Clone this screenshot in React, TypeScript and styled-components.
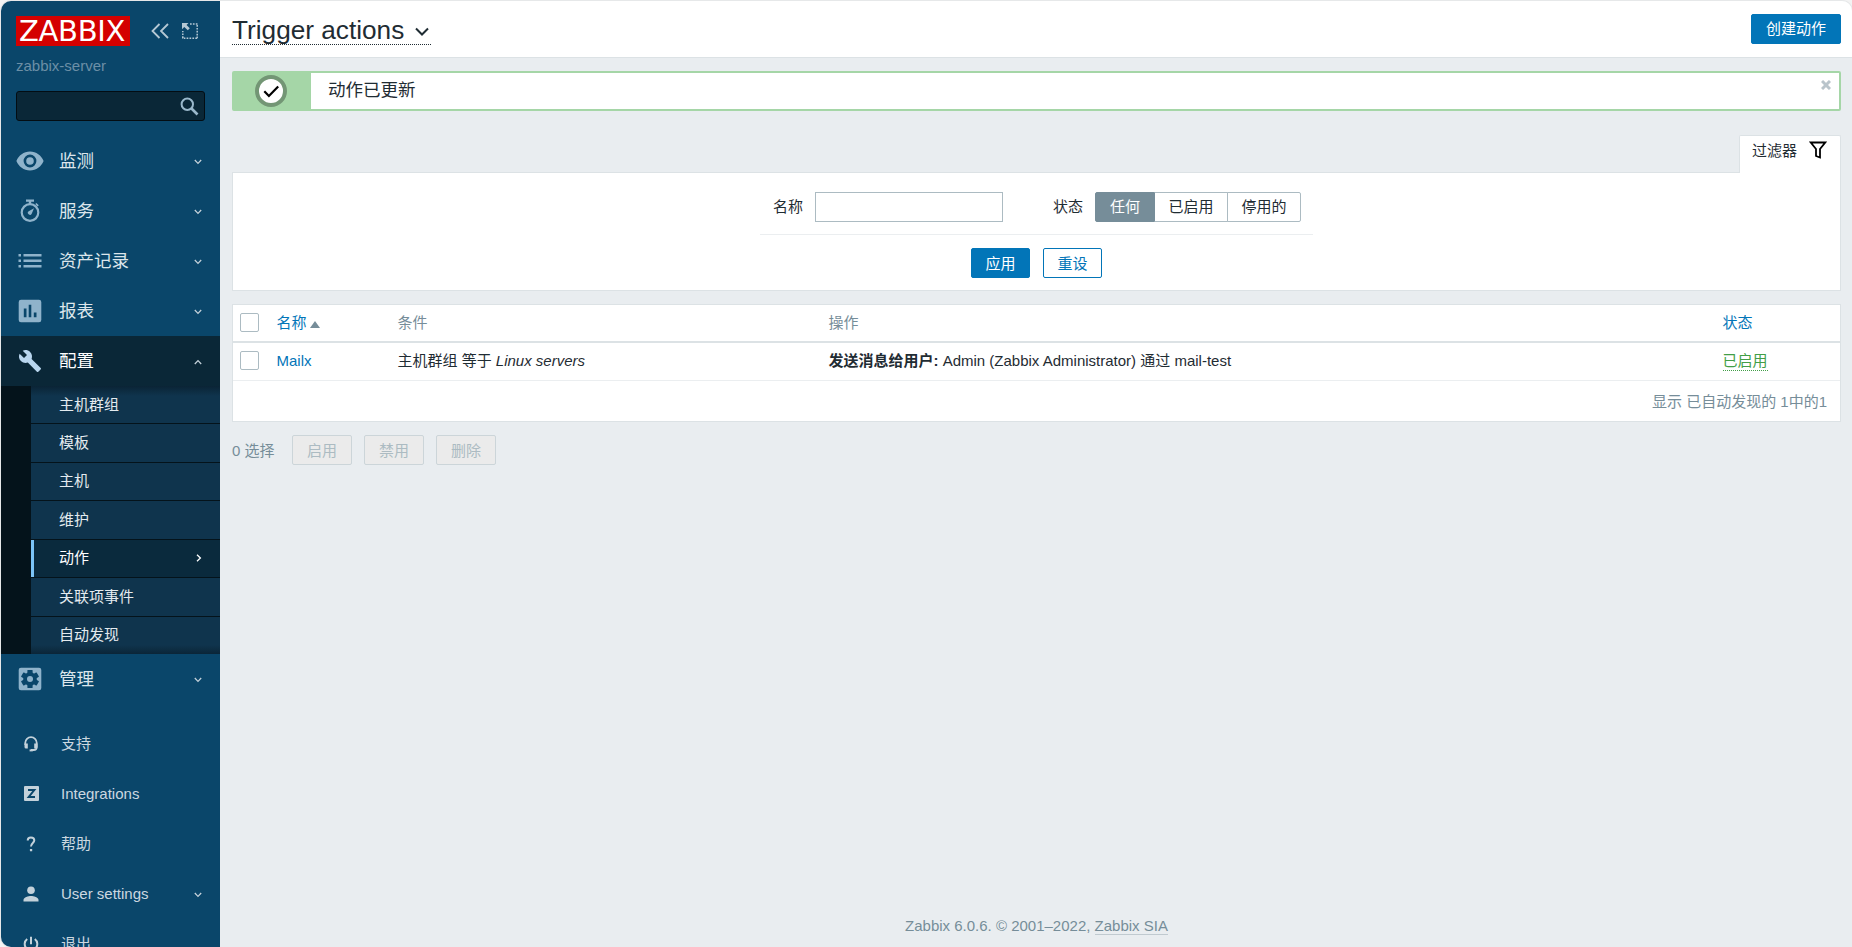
import React from 'react';
import styled, { createGlobalStyle, css } from 'styled-components';

const Global = createGlobalStyle`
  * { box-sizing: border-box; }
  html, body { margin: 0; padding: 0; }
  body {
    background: #f3f3f3;
    color: #1f2c33;
    font: 15px/18px "Liberation Sans", Arial, "Noto Sans CJK SC", sans-serif;
    overflow: hidden;
  }
  a { color: #0275b8; text-decoration: none; }
  button, input { font: inherit; }
  svg { display: block; }
`;

const Frame = styled.div`
  display: flex;
  width: 1852px;
  height: 947px;
  padding: 1px 0 0 1px;
`;
const Shell = styled.div`
  display: flex;
  flex: 1;
  border-radius: 10px 10px 0 10px;
  overflow: hidden;
  box-shadow: 0 0 0 1px #e6e8e9;
`;

/* ---------- sidebar ---------- */
const Sidebar = styled.aside`
  flex: none;
  width: 219px;
  height: 946px;
  background: #0a466a;
  overflow: hidden;
  display: flex;
  flex-direction: column;
`;
const LogoRow = styled.div`
  display: flex;
  align-items: center;
  height: 30px;
  margin: 15px 0 0 15px;
`;
const Logo = styled.div`
  width: 114px;
  height: 30px;
  padding-left: 3px;
  background: #d40000;
  color: #fff;
  font: 29px/31px "DejaVu Sans", sans-serif;
  letter-spacing: -.3px;
  white-space: nowrap;
`;
const HeadButtons = styled.div`
  display: flex;
  gap: 13px;
  margin-left: 21px;
  color: #b5c8d4;
`;
const ServerName = styled.div`
  margin: 11px 0 0 15px;
  height: 18px;
  color: #6c8fa6;
`;
const Search = styled.div`
  display: flex;
  justify-content: flex-end;
  align-items: center;
  flex: none;
  width: 189px;
  height: 30px;
  margin: 16px 0 15px 15px;
  padding-right: 5px;
  border: 1px solid #030d13;
  border-radius: 3px;
  background: #0a2737;
  color: #9ab8cb;
`;
const Item = styled.div<{ $open?: boolean }>`
  display: flex;
  align-items: center;
  flex: none;
  height: 50px;
  padding: 0 18px 1px 15px;
  font-size: 17.5px;
  line-height: 22px;
  color: ${p => (p.$open ? '#fff' : '#dde6ec')};
  background: ${p => (p.$open ? '#0a2737' : 'transparent')};
`;
const ItemIcon = styled.span<{ $open?: boolean }>`
  display: flex;
  justify-content: center;
  width: 28px;
  margin-right: 15px;
  color: ${p => (p.$open ? '#b9d6ee' : '#8fb3cb')};
`;
const ItemText = styled.span`
  flex: 1;
`;
const Arrow = styled.span`
  margin-top: 3px;
  color: #c3d0d9;
`;
const Submenu = styled.div`
  flex: none;
  height: 268px;
  padding-left: 30px;
  background: #04131b;
`;
const SubList = styled.div`
  height: 268px;
  background:
    linear-gradient(to bottom, rgba(5, 20, 30, .5), rgba(5, 20, 30, 0) 10px),
    linear-gradient(to top, rgba(5, 20, 30, .45), rgba(5, 20, 30, 0) 9px),
    #0f344d;
`;
const SubItem = styled.div<{ $active?: boolean }>`
  display: flex;
  align-items: center;
  justify-content: space-between;
  height: 38.5px;
  padding: 0 17px 0 28px;
  color: #e4ebef;
  border-top: 1px solid #04131b;
  &:first-child { height: 37px; border-top: 0; }
  ${p => p.$active && css`
    color: #fff;
    background: linear-gradient(to right, #7cc4f7 3px, #0a2a3d 3px);
  `}
`;
const UserMenu = styled.div`
  margin-top: 14px;
`;
const UserItem = styled.div`
  display: flex;
  align-items: center;
  height: 50px;
  padding: 1px 18px 0 21px;
  color: #ccd8e0;
`;
const UserIcon = styled.span`
  display: flex;
  justify-content: center;
  width: 18px;
  margin-right: 21px;
  color: #c3d1da;
`;

/* ---------- main area ---------- */
const Main = styled.main`
  flex: 1;
  display: flex;
  flex-direction: column;
  background: #e9edf0;
`;
const Header = styled.header`
  display: flex;
  justify-content: space-between;
  align-items: flex-start;
  height: 57px;
  padding: 13px 11px 0 12px;
  background: #fff;
  border-bottom: 1px solid #dce2e5;
`;
const Title = styled.h1`
  display: flex;
  align-items: center;
  height: 31px;
  width: 199px;
  margin: 0;
  font-size: 26.2px;
  line-height: 31px;
  font-weight: 400;
  white-space: nowrap;
  background: repeating-linear-gradient(to right, #1f2c33 0 1px, transparent 1px 2px) bottom / 100% 1px no-repeat;
  svg { margin: 5px 0 0 10px; }
`;
const TitleText = styled.span`
  display: block;
  width: 173px;
  margin-top: 1px;
`;
const Button = styled.button<{ $kind?: 'solid' | 'outline' | 'disabled'; $w: number; $low?: boolean }>`
  width: ${p => p.$w}px;
  height: 30px;
  padding: ${p => (p.$low ? '1px 0 0' : '0')};
  line-height: ${p => (p.$low ? 27 : 28)}px;
  border-radius: 2px;
  border: 1px solid #0275b8;
  background: #0275b8;
  color: #fff;
  ${p => p.$kind === 'outline' && css`background: #fff; color: #0275b8;`}
  ${p => p.$kind === 'disabled' && css`
    background: #ebebeb; color: #acbbc2; border-color: #ccd5d9;
  `}
`;
const Content = styled.div`
  flex: 1;
  display: flex;
  flex-direction: column;
  padding: 13px 11px 0 12px;
`;
const Message = styled.section`
  display: flex;
  height: 40px;
  border: 2px solid #a5d6a7;
  border-radius: 2px;
  background: #fff;
`;
const MessageIcon = styled.div`
  width: 77px;
  padding: 2px 0 0 21px;
  background: #a5d6a7;
`;
const MessageText = styled.div`
  flex: 1;
  padding: 5px 0 0 17px;
  font-size: 17.5px;
  line-height: 24px;
`;
const Close = styled.span`
  padding: 7px 8px 0 0;
  color: #b9c4cb;
`;
const FilterTab = styled.div`
  display: flex;
  align-items: center;
  align-self: flex-end;
  justify-content: space-between;
  width: 102px;
  height: 38px;
  margin: 24px 0 -1px;
  padding: 0 13px 7px 12px;
  border: 1px solid #dce2e5;
  border-bottom: 0;
  border-radius: 2px 2px 0 0;
  background: #fff;
  position: relative;
  svg { margin-top: -2px; }
`;
const Filter = styled.section`
  height: 119px;
  border: 1px solid #dce2e5;
  background: #fff;
  display: flex;
  flex-direction: column;
  align-items: center;
  padding-top: 19px;
`;
const FilterForm = styled.div`
  display: flex;
  align-items: center;
  width: 553px;
  height: 43px;
  padding: 0 12px 13px 13px;
  border-bottom: 1px solid #ebeef0;
`;
const TextInput = styled.input`
  width: 188px;
  height: 30px;
  margin: 0 50px 0 12px;
  border: 1px solid #acbbc2;
  background: #fff;
`;
const Segments = styled.div`
  display: flex;
  margin-left: 12px;
`;
const Segment = styled.span<{ $w: number; $on?: boolean }>`
  width: ${p => p.$w}px;
  height: 30px;
  line-height: 28px;
  text-align: center;
  border: 1px solid ${p => (p.$on ? '#768d99' : '#acbbc2')};
  background: ${p => (p.$on ? '#768d99' : '#fff')};
  color: ${p => (p.$on ? '#fff' : '#1f2c33')};
  & + & { border-left-width: 0; }
  & + & + & { border-left-width: 1px; margin-left: -1px; }
  &:first-child { border-radius: 2px 0 0 2px; }
  &:last-child { border-radius: 0 2px 2px 0; }
`;
const FilterButtons = styled.div`
  display: flex;
  gap: 13px;
  margin-top: 13px;
`;
const Table = styled.section`
  margin-top: 13px;
  border: 1px solid #dce2e5;
  background: #fff;
`;
const Row = styled.div<{ $head?: boolean }>`
  display: grid;
  grid-template-columns: 36.5px 121px 431px 894px 1fr;
  align-items: center;
  height: 38px;
  padding-left: 7px;
  padding-bottom: ${p => (p.$head ? 1 : 2)}px;
  color: ${p => (p.$head ? '#768d99' : '#1f2c33')};
  border-bottom: ${p => (p.$head ? '2px solid #dce2e5' : '1px solid #ebeef0')};
`;
const Check = styled.span`
  width: 19px;
  height: 19px;
  border: 1px solid #acbbc2;
  border-radius: 2px;
  background: #fff;
`;
const SortLink = styled.a`
  display: flex;
  align-items: center;
  gap: 3px;
`;
const SortMark = styled.span`
  margin-top: 4px;
  border: 5px solid transparent;
  border-bottom: 7px solid #768d99;
  border-top: 0;
`;
const Enabled = styled.a`
  justify-self: start;
  height: 19px;
  line-height: 18px;
  margin-top: 1px;
  color: #429e47;
  border-bottom: 1px dotted #429e47;
`;
const TableFoot = styled.div`
  height: 40px;
  padding: 12px 13px 0 0;
  text-align: right;
  color: #768d99;
`;
const Actions = styled.div`
  display: flex;
  align-items: center;
  gap: 12px;
  margin-top: 13px;
  color: #768d99;
`;
const Selected = styled.span`
  width: 48px;
  padding-top: 1px;
  white-space: nowrap;
`;
const Footer = styled.footer`
  margin: auto 0 12px;
  text-align: center;
  color: #768d99;
  a { color: #768d99; display: inline-block; height: 18px; border-bottom: 1px solid #c0cad0; }
`;

/* ---------- icons ---------- */
const Chevron = ({ dir = 'down' }: { dir?: 'down' | 'up' | 'right' }) => (
  <svg width="8" height="8" viewBox="0 0 8 8" fill="none" stroke="currentColor" strokeWidth="1.3">
    <path d={dir === 'down' ? 'M.8 2l3.2 3.4L7.2 2' : dir === 'up' ? 'M.8 6L4 2.6 7.2 6' : 'M2 .8L5.4 4 2 7.2'} />
  </svg>
);

const Glyph = ({ d, size = 24, box = '0 0 24 24' }: { d: string; size?: number; box?: string }) => (
  <svg width={size} height={size} viewBox={box} fill="currentColor" fillRule="evenodd"><path d={d} /></svg>
);

const EyeIcon = () => (
  <svg width="28" height="20" viewBox="0 0 28 20" fill="currentColor" fillRule="evenodd">
    <path d="M14 .5C7.800 .5 2.600 4.400.4 10c2.200 5.600 7.400 9.500 13.600 9.500s11.400-3.900 13.600-9.500C25.400 4.400 20.200.5 14 .5zm0 15.900a6.400 6.400 0 1 1 0-12.800 6.400 6.400 0 0 1 0 12.800zm0-10.200a3.800 3.800 0 1 0 0 7.600 3.800 3.800 0 0 0 0-7.600z" />
  </svg>
);
const WatchIcon = () => (
  <svg width="20" height="24" viewBox="0 0 20 24" fill="none" stroke="currentColor">
    <circle cx="10" cy="13.500" r="8.300" strokeWidth="2.200" />
    <path d="M6 1.600h8M10 2v3" strokeWidth="2.400" />
    <path d="M15.800 4.500l2.400 2.400" strokeWidth="1.600" />
    <path d="M14 9.300l-2.300 5.400a2 2 0 1 1-3-2.500z" fill="currentColor" stroke="none" />
  </svg>
);
const ListIcon = () => (
  <Glyph d="M.5 5h2.500v2.400H.5zM5.500 5h18v2.400h-18zM.5 10.500h2.500v2.400H.5zM5.500 10.500h18v2.400h-18zM.5 16h2.500v2.400H.5zM5.500 16h18v2.400h-18z" />
);
const ReportIcon = () => (
  <Glyph d="M3 .8h18A2.300 2.300 0 0 1 23.300 3v18a2.300 2.300 0 0 1-2.300 2.300H3A2.300 2.300 0 0 1 .7 21V3A2.300 2.300 0 0 1 3 .8zM5.800 9.600v8.600h2.700V9.600zM10.700 5.800v12.400h2.600V5.800zM15.800 13.400v4.800h2.700v-4.800z" />
);
const WrenchIcon = () => (
  <Glyph d="M22.700 19l-9.100-9.100c.9-2.300.4-5-1.500-6.900-2-2-5-2.400-7.400-1.300L9 6 6 9 1.600 4.700C.4 7.100.9 10.100 2.900 12.100c1.900 1.900 4.600 2.400 6.900 1.500l9.100 9.100c.4.400 1 .4 1.400 0l2.300-2.300c.5-.4.5-1.100.1-1.400z" />
);
const GearIcon = () => (
  <svg width="24" height="24" viewBox="0 0 24 24">
    <rect x=".7" y=".7" width="22.600" height="22.600" rx="2.300" fill="currentColor" />
    <g fill="#0a466a">
      <circle cx="12" cy="12" r="6.800" />
      {[0, 60, 120].map(a => (
        <rect key={a} x="9.400" y="3" width="5.200" height="18" rx=".6" transform={`rotate(${a} 12 12)`} />
      ))}
    </g>
    <circle cx="12" cy="12" r="3" fill="currentColor" />
  </svg>
);
const HeadsetIcon = () => (
  <svg width="16" height="16" viewBox="0 0 16 16" fill="none" stroke="currentColor" strokeWidth="1.800">
    <path d="M2.300 9V6.800a5.700 5.700 0 0 1 11.400 0v4.400c0 1.700-1.200 2.800-3 2.800H8" />
    <path d="M1.500 7.500h3.300v5H3a1.500 1.500 0 0 1-1.500-1.500zM11.200 7.500h3.300V11a1.500 1.500 0 0 1-1.500 1.500h-1.800z" fill="currentColor" stroke="none" />
    <path d="M6.600 14.400h3.200" strokeWidth="2" />
  </svg>
);
const ZIcon = () => (
  <svg width="15" height="15" viewBox="0 0 15 15">
    <rect width="15" height="15" rx="1" fill="currentColor" />
    <path d="M4 4h6.300L4.700 11H11" fill="none" stroke="#0a466a" strokeWidth="2" />
  </svg>
);
const HelpIcon = () => (
  <svg width="10" height="16" viewBox="0 0 10 16" fill="none" stroke="currentColor" strokeWidth="2">
    <path d="M1.700 4.600C1.700 2.600 3 1.500 4.900 1.500S8.300 2.500 8.300 4.300C8.300 6.900 5 7 5 10.400" />
    <path d="M3.900 13h2.300v2.300H3.900z" fill="currentColor" stroke="none" />
  </svg>
);
const PersonIcon = () => (
  <svg width="16" height="16" viewBox="0 0 16 16" fill="currentColor">
    <circle cx="8" cy="4.300" r="3.800" />
    <path d="M.5 15.500v-1.700c0-2.500 5-3.900 7.500-3.900s7.500 1.400 7.500 3.900v1.700z" />
  </svg>
);
const PowerIcon = () => (
  <svg width="16" height="16" viewBox="0 0 16 16" fill="none" stroke="currentColor" strokeWidth="2">
    <path d="M8 .8v7.400M4.200 3A6.300 6.300 0 1 0 11.800 3" />
  </svg>
);

const mainItems = [
  { label: '监测', icon: <EyeIcon /> },
  { label: '服务', icon: <WatchIcon /> },
  { label: '资产记录', icon: <ListIcon /> },
  { label: '报表', icon: <ReportIcon /> },
];
const subItems = ['主机群组', '模板', '主机', '维护', '动作', '关联项事件', '自动发现'];
const userItems = [
  { label: '支持', icon: <HeadsetIcon /> },
  { label: 'Integrations', icon: <ZIcon /> },
  { label: '帮助', icon: <HelpIcon /> },
  { label: 'User settings', icon: <PersonIcon />, arrow: true },
  { label: '退出', icon: <PowerIcon /> },
];

const SidebarNav = () => (
  <Sidebar>
    <LogoRow>
      <Logo>ZABBIX</Logo>
      <HeadButtons>
        <svg width="18" height="16" viewBox="0 0 18 16" fill="none" stroke="currentColor" strokeWidth="1.800">
          <path d="M8.500 1L1.500 8l7 7M17 1l-7 7 7 7" />
        </svg>
        <svg width="16" height="16" viewBox="0 0 16 16" fill="none" stroke="currentColor">
          <path d="M8 1h8M15.200 2v14M15 15.200H0M.8 15V8" strokeWidth="1.500" strokeDasharray="1.700 1.200" />
          <path d="M0 0h6.500L4.500 2l3.300 3.300-2 2L2.300 4 0 6.300z" fill="currentColor" stroke="none" />
        </svg>
      </HeadButtons>
    </LogoRow>
    <ServerName>zabbix-server</ServerName>
    <Search>
      <svg width="19" height="19" viewBox="0 0 19 19" fill="none" stroke="currentColor">
        <circle cx="7.300" cy="7.300" r="5.700" strokeWidth="2" />
        <path d="M11.500 11.500l6 6" strokeWidth="2.600" />
      </svg>
    </Search>
    {mainItems.map(i => (
      <Item key={i.label}>
        <ItemIcon>{i.icon}</ItemIcon>
        <ItemText>{i.label}</ItemText>
        <Arrow><Chevron /></Arrow>
      </Item>
    ))}
    <Item $open>
      <ItemIcon $open><WrenchIcon /></ItemIcon>
      <ItemText>配置</ItemText>
      <Arrow><Chevron dir="up" /></Arrow>
    </Item>
    <Submenu>
      <SubList>
        {subItems.map(s => (
          <SubItem key={s} $active={s === '动作'}>
            {s}
            {s === '动作' && <Chevron dir="right" />}
          </SubItem>
        ))}
      </SubList>
    </Submenu>
    <Item>
      <ItemIcon><GearIcon /></ItemIcon>
      <ItemText>管理</ItemText>
      <Arrow><Chevron /></Arrow>
    </Item>
    <UserMenu>
      {userItems.map(i => (
        <UserItem key={i.label}>
          <UserIcon>{i.icon}</UserIcon>
          <ItemText>{i.label}</ItemText>
          {i.arrow && <Arrow><Chevron /></Arrow>}
        </UserItem>
      ))}
    </UserMenu>
  </Sidebar>
);

export default function App() {
  return (
    <Frame>
      <Global />
      <Shell>
        <SidebarNav />
        <Main>
          <Header>
            <Title>
              <TitleText>Trigger actions</TitleText>
              <svg width="14" height="10" viewBox="0 0 14 10" fill="none" stroke="#1f2c33" strokeWidth="2">
                <path d="M1 1.500l6 6 6-6" />
              </svg>
            </Title>
            <Button $w={90}>创建动作</Button>
          </Header>
          <Content>
            <Message>
              <MessageIcon>
                <svg width="32" height="32" viewBox="0 0 32 32" fill="none">
                  <circle cx="16" cy="16" r="14" fill="#fff" stroke="#739675" strokeWidth="4" />
                  <path d="M9.300 16.300l4.600 4.700 9.300-9.600" stroke="#000" strokeWidth="2.200" />
                </svg>
              </MessageIcon>
              <MessageText>动作已更新</MessageText>
              <Close>
                <svg width="10" height="10" viewBox="0 0 10 10" stroke="currentColor" strokeWidth="3">
                  <path d="M1 1l8 8M9 1L1 9" />
                </svg>
              </Close>
            </Message>
            <FilterTab>
              过滤器
              <svg width="18" height="18" viewBox="0 0 18 18" fill="none" stroke="#000" strokeWidth="1.800">
                <path d="M1.800 1.500h14.400l-5.200 6.500v8.500l-4-1.500V8z" />
              </svg>
            </FilterTab>
            <Filter>
              <FilterForm>
                名称
                <TextInput />
                状态
                <Segments>
                  <Segment $w={60} $on>任何</Segment>
                  <Segment $w={73}>已启用</Segment>
                  <Segment $w={74}>停用的</Segment>
                </Segments>
              </FilterForm>
              <FilterButtons>
                <Button $w={59} $low>应用</Button>
                <Button $w={59} $low $kind="outline">重设</Button>
              </FilterButtons>
            </Filter>
            <Table>
              <Row $head>
                <Check />
                <SortLink href="#">名称<SortMark /></SortLink>
                <span>条件</span>
                <span>操作</span>
                <a href="#">状态</a>
              </Row>
              <Row>
                <Check />
                <a href="#">Mailx</a>
                <span>主机群组 等于 <em>Linux servers</em></span>
                <span><b>发送消息给用户:</b> Admin (Zabbix Administrator) 通过 mail-test</span>
                <Enabled href="#">已启用</Enabled>
              </Row>
              <TableFoot>显示 已自动发现的 1中的1</TableFoot>
            </Table>
            <Actions>
              <Selected>0 选择</Selected>
              <Button $w={60} $low $kind="disabled" disabled>启用</Button>
              <Button $w={60} $low $kind="disabled" disabled>禁用</Button>
              <Button $w={60} $low $kind="disabled" disabled>删除</Button>
            </Actions>
            <Footer>Zabbix 6.0.6. © 2001–2022, <a href="#">Zabbix SIA</a></Footer>
          </Content>
        </Main>
      </Shell>
    </Frame>
  );
}
